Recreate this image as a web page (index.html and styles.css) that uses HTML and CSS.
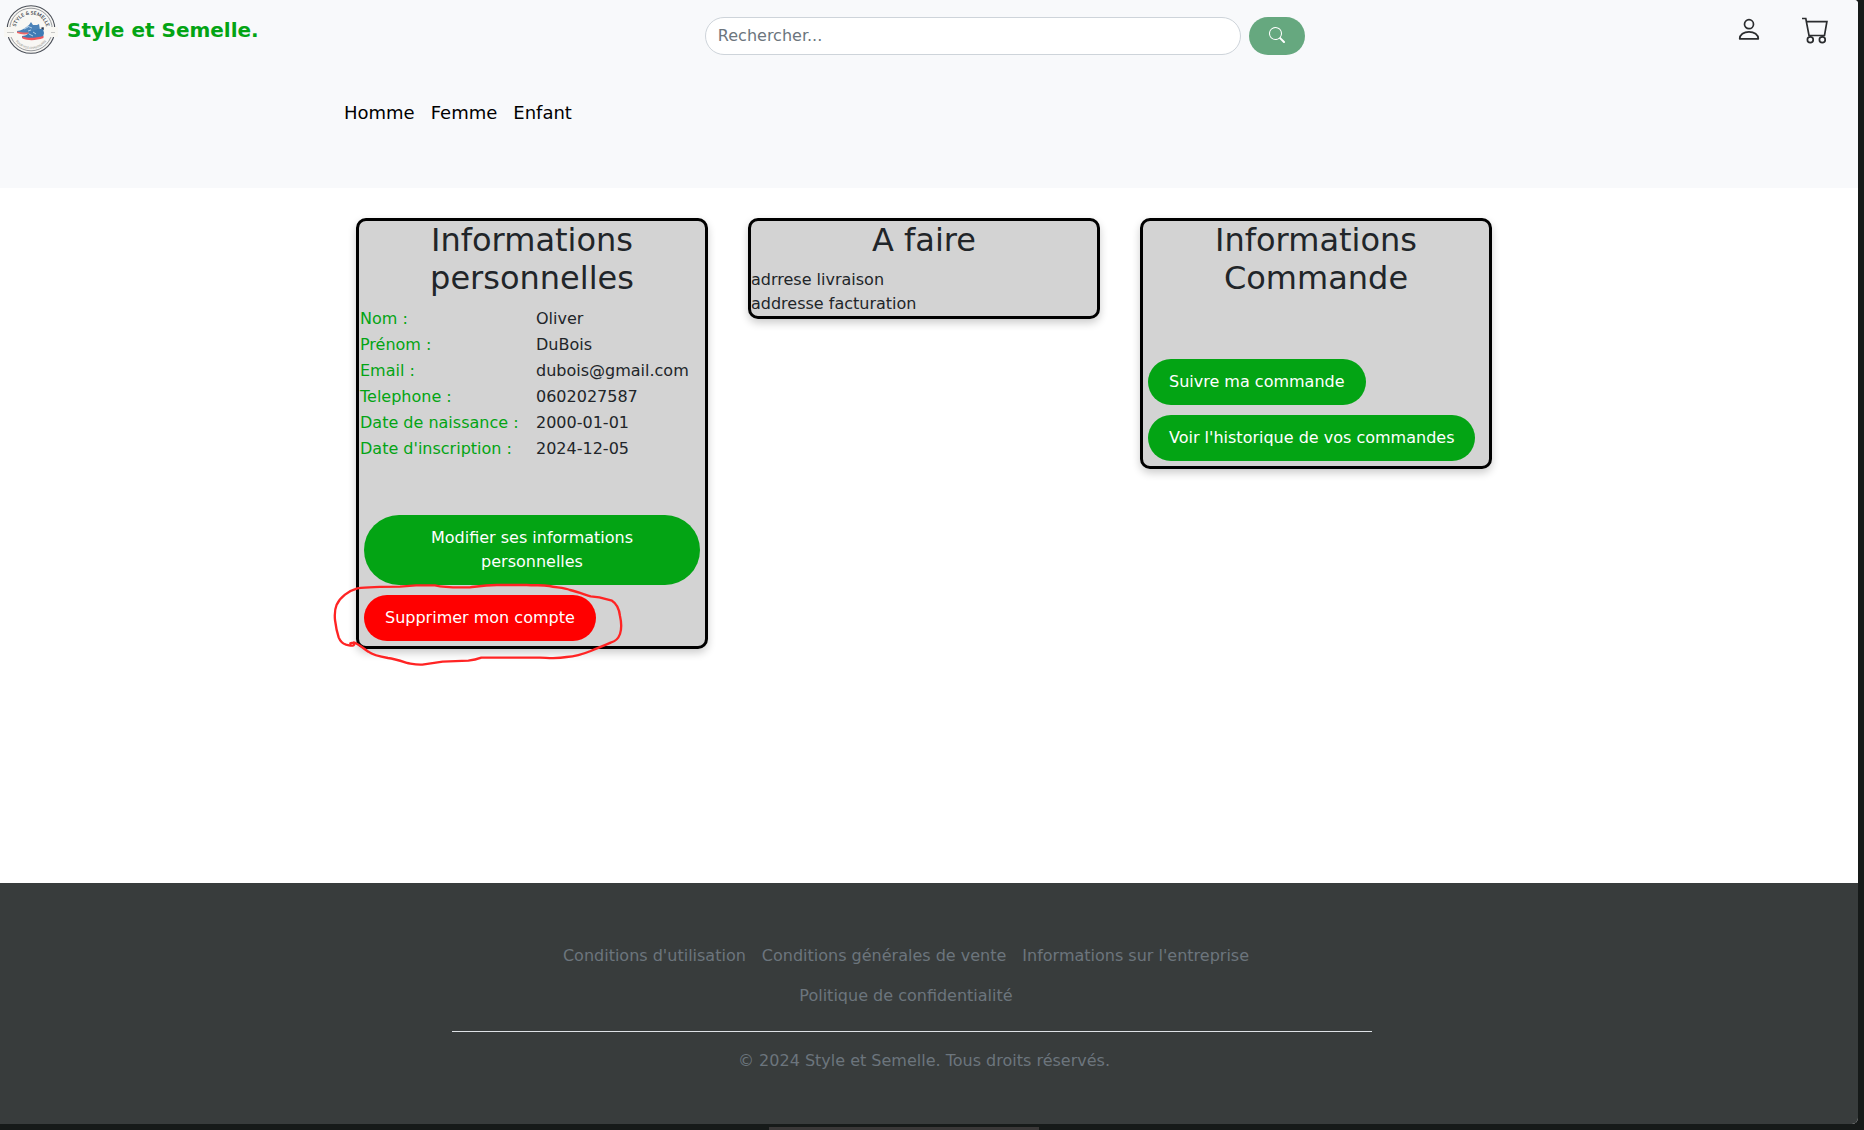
FILE: index.html
```html
<!DOCTYPE html>
<html lang="fr">
<head>
<meta charset="utf-8">
<meta name="viewport" content="width=device-width, initial-scale=1">
<title>Style et Semelle</title>
<link rel="stylesheet" href="styles.css">
</head>
<body>
<div class="window">
  <header class="site-header">
    <div class="topbar">
      <a class="brand" href="#">
        <svg class="logo" viewBox="0 0 54 50" aria-hidden="true">
          <defs>
            <path id="arc-top" d="M11.500 25 A15.500 15.500 0 0 1 42.500 25"/>
            <path id="arc-bottom" d="M8 25 A19 19 0 0 0 46 25"/>
          </defs>
          <circle cx="27" cy="24.500" r="23.800" fill="#f8f7f4" stroke="#4a4f58" stroke-width="1.100"/>
          <circle cx="27" cy="24.500" r="21.300" fill="none" stroke="#6d7178" stroke-width=".7"/>
          <path d="M0 22h54v10H0z" fill="#f8f7f3"/>
          <text class="logo-text"><textPath href="#arc-top" startOffset="50%">STYLE &amp; SEMELLE</textPath></text>
          <text class="logo-text logo-text-light"><textPath href="#arc-bottom" startOffset="50%">POUR VOS CHAUSSURES</textPath></text>
          <path d="M3 27.500h7M47 27.500h4" stroke="#b9b9b8" stroke-width=".8"/>
          <path d="M13 26c4 0 8-3 12-6l2-3 2 3 4 0 2-1 1 6-9 3-14 0z" fill="#4b82b8"/>
          <path d="M13 26.500c4 1 8 1 12 1l-1 1.500c-4 1-8 0-11-1z" fill="#ef6767"/>
          <path d="M18 31c5 0 6-3 10-5l6-2 5 0 1 4-1 4-9 2-12-1z" fill="#3f7bb5"/>
          <path d="M18 31.500c8 2.500 14 1 21.500-.5v2c-7 2.500-15 3-21 .5z" fill="#f2585d"/>
          <path d="M20 24l4-2M23 21l5 2M24 26l3-1M25 29l4 2M29 27l3 2" stroke="#cfe3f2" stroke-width=".8" fill="none"/>
          <path d="M36.500 23l3-1 .5 3z" fill="#263246"/>
        </svg>
        <span>Style et Semelle.</span>
      </a>
      <form class="search">
        <input class="search-input" type="search" placeholder="Rechercher..." aria-label="Rechercher">
        <button class="search-button" type="button" aria-label="Lancer la recherche">
          <svg width="16" height="16" viewBox="0 0 16 16" fill="currentColor"><path d="M11.742 10.344a6.500 6.500 0 1 0-1.397 1.398h-.001c.03.04.062.078.098.115l3.850 3.850a1 1 0 0 0 1.415-1.414l-3.850-3.850a1.007 1.007 0 0 0-.115-.1zM12 6.500a5.500 5.500 0 1 1-11 0 5.500 5.500 0 0 1 11 0"/></svg>
        </button>
      </form>
      <div class="actions">
        <a href="#" aria-label="Mon compte">
          <svg width="22" height="26" viewBox="0 0 22 26" fill="none" stroke="#2b2d2f" stroke-width="1.700"><circle cx="11" cy="7.200" r="4.500"/><path d="M1.700 21.800c0-4 4-7 9.300-7s9.300 3 9.300 7z" stroke-linejoin="round"/></svg>
        </a>
        <a href="#" aria-label="Panier">
          <svg width="26" height="28" viewBox="0 0 26 28" fill="none" stroke="#2b2d2f" stroke-width="1.700"><path d="M0 1.500h3.800l3.200 17h15.500l2.400-13.800H4.400"/><circle cx="8.300" cy="22.800" r="2.900"/><circle cx="20.300" cy="22.800" r="2.900"/></svg>
        </a>
      </div>
    </div>
    <nav class="categories">
      <a href="#">Homme</a>
      <a href="#">Femme</a>
      <a href="#">Enfant</a>
    </nav>
  </header>

  <main class="account">
    <section class="card">
      <h2>Informations personnelles</h2>
      <table class="details">
        <tr><th scope="row">Nom :</th><td>Oliver</td></tr>
        <tr><th scope="row">Prénom :</th><td>DuBois</td></tr>
        <tr><th scope="row">Email :</th><td>dubois@gmail.com</td></tr>
        <tr><th scope="row">Telephone :</th><td>0602027587</td></tr>
        <tr><th scope="row">Date de naissance :</th><td>2000-01-01</td></tr>
        <tr><th scope="row">Date d'inscription :</th><td>2024-12-05</td></tr>
      </table>
      <div class="buttons">
        <button class="pill" type="button">Modifier ses informations personnelles</button>
        <div class="marked">
          <button class="pill pill-danger" type="button">Supprimer mon compte</button>
          <svg class="scribble" viewBox="0 0 1200 360" aria-hidden="true">
            <path d="M102 247C106 262 90 256 78 254C66 250 60 242 56 232C50 214 47 196 45 180C43 158 45 146 50 134C60 112 86 92 112 85C150 80 190 80 240 80L288 76H345C380 84 410 82 450 82C480 78 495 75 530 75H620C650 77 665 74 688 78C712 83 732 83 750 90C775 96 795 104 812 109L838 112L876 122C892 132 898 150 900 168C905 190 906 204 900 222C895 236 888 244 872 248C850 258 832 264 812 273C790 282 770 289 740 291C710 297 690 294 660 293H484C470 298 462 300 445 302L368 305L312 313C295 316 280 312 262 309C240 302 222 296 204 294C180 290 160 286 145 275C130 265 118 254 108 250C102 246 96 248 91 250"/>
          </svg>
        </div>
      </div>
    </section>

    <section class="card">
      <h2>A faire</h2>
      <p>adrrese livraison<br>addresse facturation</p>
    </section>

    <section class="card">
      <h2>Informations Commande</h2>
      <div class="buttons">
        <button class="pill" type="button">Suivre ma commande</button>
        <button class="pill" type="button">Voir l'historique de vos commandes</button>
      </div>
    </section>
  </main>

  <footer class="site-footer">
    <div class="footer-top">
      <ul class="footer-links">
        <li><a href="#">Conditions d'utilisation</a></li>
        <li><a href="#">Conditions générales de vente</a></li>
        <li><a href="#">Informations sur l'entreprise</a></li>
        <li><a href="#">Politique de confidentialité</a></li>
      </ul>
    </div>
    <p class="copyright">© 2024 Style et Semelle. Tous droits réservés.</p>
  </footer>
</div>
<div class="dock"><div class="dock-bar"></div></div>
</body>
</html>
```
FILE: styles.css
```css
*, *::before, *::after { box-sizing: border-box; }

body {
  margin: 0;
  min-height: 100vh;
  display: flex;
  flex-direction: column;
  background: #161a19;
  color: #212529;
  font: 16px/24px "DejaVu Sans", sans-serif;
}

a { color: inherit; text-decoration: none; }
button, input { font: inherit; }
h2, p, ul { margin: 0; padding: 0; }

.window {
  flex: 1;
  display: flex;
  flex-direction: column;
  margin-right: 6px;
  background: #fff;
  border-radius: 0 4px 6px 0;
  overflow: hidden;
}

/* Header */
.site-header {
  min-height: 188px;
  background: #f8f9fb;
}

.topbar {
  display: flex;
  justify-content: space-between;
  align-items: flex-start;
  padding: 5px 30px 0 4px;
}

.brand {
  display: flex;
  align-items: center;
  gap: 9px;
  padding-right: 13px;
  color: #03a414;
  font-size: 20px;
  font-weight: bold;
}

.logo { width: 54px; height: 50px; }

.logo-text {
  fill: #444a52;
  font: bold 5px "Lato", sans-serif;
  text-anchor: middle;
}

.logo-text-light { fill: #a5a5a3; font-size: 3px; }

.search {
  display: flex;
  gap: 8px;
  width: 600px;
  padding-top: 12px;
}

.search-input {
  flex: 1;
  min-width: 0;
  height: 38px;
  padding: 5px 12px 7px;
  border: 1px solid #ced4da;
  border-radius: 20px;
  background: #fff;
  color: #212529;
}

.search-input::placeholder { color: #6c757d; }

.search-button {
  display: flex;
  align-items: center;
  justify-content: center;
  width: 56px;
  height: 38px;
  padding-bottom: 3px;
  border: 0;
  border-radius: 20px;
  background: #66a87f;
  color: #fff;
}

.actions {
  display: flex;
  gap: 42px;
  padding-top: 12px;
}

.actions svg { display: block; }

.categories {
  display: flex;
  gap: 16px;
  max-width: 1170px;
  margin: 0 auto;
  padding-top: 46px;
  color: #000;
  font-size: 18px;
}

/* Account cards */
.account {
  flex: 1;
  display: grid;
  grid-template-columns: repeat(3, minmax(0, 352px));
  justify-content: center;
  align-items: start;
  gap: 40px;
  padding: 30px 10px 30px 0;
}

.card {
  border: 3px solid #000;
  border-radius: 10px;
  background: #d3d3d3;
  box-shadow: 0 4px 8px rgba(0, 0, 0, .2);
}

.card h2 {
  margin-bottom: 8px;
  font-size: 32px;
  font-weight: normal;
  line-height: 1.2;
  text-align: center;
}

.card p { padding-top: 1px; }

.details {
  width: 100%;
  border-collapse: collapse;
}

.details th,
.details td { padding: 1px; text-align: left; }

.details th {
  width: 176px;
  color: #03a414;
  font-weight: normal;
}

.buttons {
  display: flex;
  flex-direction: column;
  align-items: flex-start;
  gap: 10px;
  padding: 53px 5px 5px;
}

.pill {
  padding: 11px 21px;
  border: 0;
  border-radius: 40px;
  background: #03a414;
  color: #fff;
}

.pill-danger { background: #f00; }

/* Hand-drawn ring laid over the delete button */
.marked { position: relative; }

.scribble {
  position: absolute;
  top: -35px;
  left: -44px;
  width: 400px;
  height: 120px;
  pointer-events: none;
}

.scribble path {
  fill: none;
  stroke: #ff2424;
  stroke-width: 7;
  stroke-linejoin: round;
  stroke-linecap: round;
}

/* Footer */
.site-footer {
  padding: 53px 10px 51px 0;
  background: #383c3c;
  color: #6c757d;
  text-align: center;
}

.footer-top {
  max-width: 944px;
  margin: 0 auto;
  padding-right: 24px;
}

.footer-links {
  display: flex;
  flex-wrap: wrap;
  justify-content: center;
  padding: 0 92px 15px 80px;
  border-bottom: 1px solid #dee2e6;
  list-style: none;
}

.footer-links a {
  display: block;
  padding: 8px;
}

.copyright { padding-top: 17px; }

/* Desktop dock under the window */
.dock {
  height: 6px;
  padding: 3px 56px 0 0;
}

.dock-bar {
  width: 270px;
  height: 3px;
  margin: 0 auto;
  background: #3a3838;
}
```
